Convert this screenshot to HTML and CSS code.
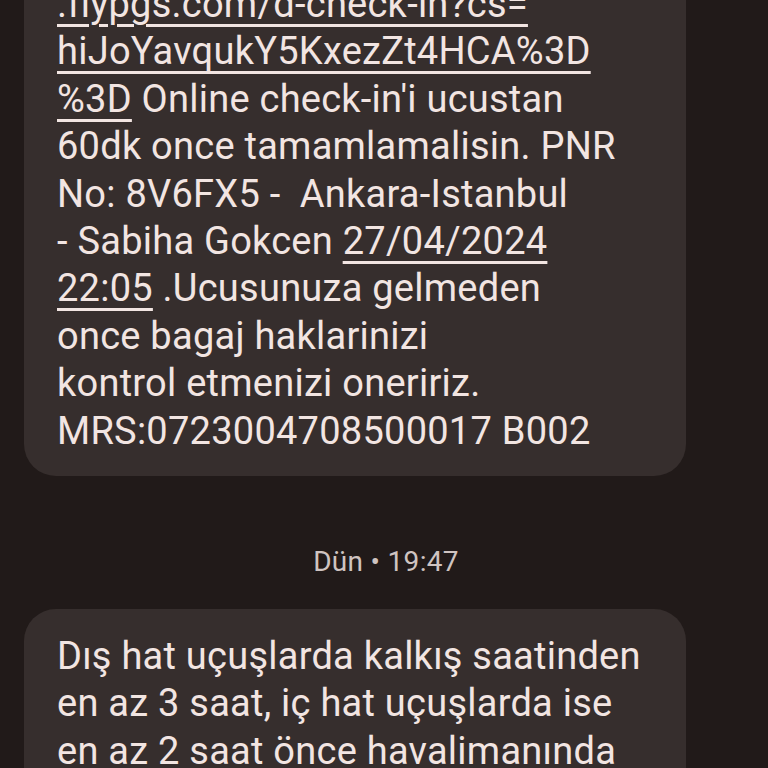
FILE: index.html
```html
<!DOCTYPE html>
<html lang="tr">
<head>
<meta charset="utf-8">
<title>Mesajlar</title>
<link rel="stylesheet" href="styles.css">
</head>
<body>
<main class="thread">
  <div class="bubble bubble-first">
    <p class="msg"><a class="link">.flypgs.com/d-check-in?cs=</a><br><a class="link">hiJoYavqukY5KxezZt4HCA%3D</a><br><a class="link">%3D</a> Online check-in'i ucustan<br>60dk once tamamlamalisin. PNR<br>No: 8V6FX5 -&nbsp; Ankara-Istanbul<br>- Sabiha Gokcen <a class="link">27/04/2024</a><br><a class="link">22:05</a> .Ucusunuza gelmeden<br>once bagaj haklarinizi<br>kontrol etmenizi oneririz.<br>MRS:0723004708500017 B002</p>
  </div>
  <div class="stamp">Dün • 19:47</div>
  <div class="bubble">
    <p class="msg">Dış hat uçuşlarda kalkış saatinden<br>en az 3 saat, iç hat uçuşlarda ise<br>en az 2 saat önce havalimanında<br>olmanızı öneririz.</p>
  </div>
</main>
</body>
</html>
```
FILE: styles.css
```css
html, body {
  margin: 0;
  padding: 0;
  background: #211a19;
  overflow: hidden;
}
body {
  width: 768px;
  height: 768px;
  font-family: Roboto, "Noto Sans", sans-serif;
  color: #f2e5e2;
}
.thread {
  display: flex;
  flex-direction: column;
  align-items: flex-start;
  margin-top: -43px;
}
.bubble {
  box-sizing: border-box;
  width: 662px;
  margin-left: 24px;
  background: #362e2d;
  border-radius: 32px;
  padding: 24px 20px 21px 33px;
}
.msg {
  margin: 0;
  font-size: 38px;
  line-height: 47.4px;
  letter-spacing: 0.25px;
  white-space: nowrap;
}
.link {
  color: inherit;
  text-decoration: underline;
  text-decoration-thickness: 2.5px;
  text-underline-offset: 7px;
}
.stamp {
  align-self: stretch;
  margin: 68px 0 29px 0;
  text-align: center;
  padding-left: 4px;
  font-size: 28px;
  line-height: 36px;
  color: #cfc4c1;
  letter-spacing: 0.3px;
}
```
